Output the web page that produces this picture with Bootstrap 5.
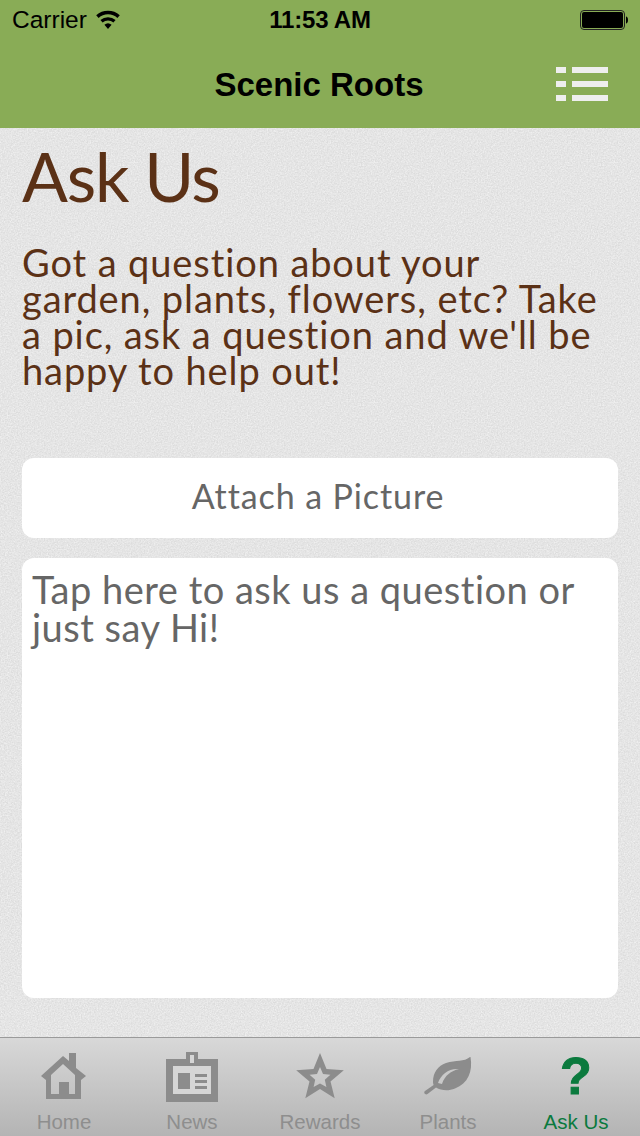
<!DOCTYPE html>
<html lang="en">
<head>
    <meta charset="UTF-8">
    <title>Scenic Roots - Ask Us</title>
    <link href="https://cdn.jsdelivr.net/npm/bootstrap@5.3.0/dist/css/bootstrap.min.css" rel="stylesheet">
    <style>
        html, body { height: 100%; }
        body { width: 640px; height: 1136px; overflow: hidden; font-family: "Liberation Sans", Arial, sans-serif; }
        .app-head { background-color: #89ac56; height: 128px; color: #000; }
        .status-row { height: 40px; padding: 0 12px; font-size: 24.5px; display: grid; grid-template-columns: 1fr auto 1fr; align-items: center; }
        .status-row .clock { font-size: 24px; font-weight: 700; letter-spacing: -.2px; }
        .title-row { height: 88px; display: grid; grid-template-columns: 1fr auto 1fr; align-items: center; padding: 0 32px; }
        .title-row .app-name { font-size: 33px; font-weight: 700; margin: 0 2px 0 0; line-height: 1; }
        .ask-body { height: 909px; padding: 0 22px; color: #5b3116; font-family: Lato, "Open Sans", sans-serif; background-color: #dcdcdc;
            background-image: url("data:image/svg+xml;utf8,<svg xmlns='http://www.w3.org/2000/svg' width='240' height='240'><filter id='n'><feTurbulence type='fractalNoise' baseFrequency='.7' numOctaves='2'/><feColorMatrix values='0 0 0 0 1 0 0 0 0 1 0 0 0 0 1 .7 .7 0 0 -.45'/></filter><rect width='240' height='240' filter='url(%23n)'/></svg>"); }
        .ask-title { font-size: 68px; line-height: 1; font-weight: 400; letter-spacing: -1.3px; margin: 0; padding-top: 14px; height: 116px; }
        .ask-intro { font-size: 38px; line-height: 36px; letter-spacing: .9px; margin: 0; height: 214px; white-space: nowrap; }
        .attach-btn { height: 80px; width: 100%; border-radius: 12px; background: #fff; border: 0; color: #666; font-size: 34px; letter-spacing: .9px; font-family: inherit; padding: 0 4px 6px 0; }
        .attach-btn:hover { background: #fff; color: #666; }
        .ask-box { height: 440px; margin-top: 20px; border-radius: 12px; border: 0; background: #fff; color: #666; font-size: 38px; line-height: 38px; letter-spacing: .5px; padding: 12px 10px; }
        .tabs { height: 99px; border-top: 1px solid #9a9a9a; background: linear-gradient(#d8d8d8, #b4b4b4); }
        .tab-item { width: 128px; color: #8e8e8e; font-size: 20.5px; line-height: 1; }
        .tab-item svg { display: block; margin-top: 14px; margin-bottom: 8px; fill: #8c8c8c; }
        .tab-item .q-mark { display: block; height: 74px; color: #0b7a3e; font-size: 52px; font-weight: 700; line-height: 76px; -webkit-text-stroke: 1px #0b7a3e; }
        .tab-item.on { color: #0b7a3e; }
    </style>
</head>
<body>

    <header class="app-head">
        <div class="status-row">
            <div class="d-flex align-items-center">
                <span>Carrier</span>
                <svg class="ms-2" width="26" height="20" viewBox="0 0 26 20"><path d="M13 19l-3.600-4.200a5.400 5.400 0 0 1 7.200 0zM7.600 12.600L5.400 10a11.600 11.600 0 0 1 15.200 0l-2.200 2.600a8.200 8.200 0 0 0-10.800 0zM3.600 7.900L1.200 5.200a17.800 17.800 0 0 1 23.600 0l-2.400 2.700a14.200 14.200 0 0 0-18.800 0z"/></svg>
            </div>
            <div class="clock">11:53 AM</div>
            <div class="d-flex justify-content-end">
                <svg width="48" height="20" viewBox="0 0 48 20"><rect x=".5" y=".5" width="44" height="19" rx="3.500" fill="none" stroke="#222"/><rect x="2" y="2" width="41" height="16" rx="2"/><path d="M46 6.500c1.200 0 2 1.200 2 3.500s-.8 3.500-2 3.500z"/></svg>
            </div>
        </div>
        <div class="title-row">
            <div></div>
            <h1 class="app-name">Scenic Roots</h1>
            <div class="d-flex justify-content-end">
                <svg width="52" height="35" viewBox="0 0 52 35" fill="#eeeeee"><path d="M0 0h10v6H0zM16 0h36v6H16zM0 14h10v6H0zM16 14h36v6H16zM0 28h10v6H0zM16 28h36v6H16z"/></svg>
            </div>
        </div>
    </header>

    <main class="ask-body">
        <h2 class="ask-title">Ask Us</h2>
        <p class="ask-intro">Got a question about your<br>garden, plants, flowers, etc? Take<br>a pic, ask a question and we'll be<br>happy to help out!</p>
        <button type="button" class="btn attach-btn">Attach a Picture</button>
        <div class="ask-box">Tap here to ask us a question or<br>just say Hi!</div>
    </main>

    <nav class="tabs d-flex">
        <div class="tab-item d-flex flex-column align-items-center">
            <svg width="56" height="52" viewBox="0 0 56 52"><path fill-rule="evenodd" d="M5 24L27 4l6 5V1h7v15l10 8-5 4v19H10V28zM27 12L15 23v19h8V30h10v12h6V23z"/></svg>
            <span>Home</span>
        </div>
        <div class="tab-item d-flex flex-column align-items-center">
            <svg width="56" height="52" viewBox="0 0 56 52"><path d="M26 3h4v8h-4zM9 14h38v28H9z" fill="#d6d6d6"/><path fill-rule="evenodd" d="M2 7h20V0h12v7h20v43H2zM26 3v8h4V3zM9 14v28h38V14z"/><path d="M14 21h12v16H14zM31 22h12v3H31zM31 28h12v3H31zM31 34h12v3H31z"/></svg>
            <span>News</span>
        </div>
        <div class="tab-item d-flex flex-column align-items-center">
            <svg width="56" height="52" viewBox="0 0 56 52"><path fill-rule="evenodd" d="M28 1l6.500 16.100 17.300 1.200-13.300 11.100 4.200 16.800L28 37l-14.700 9.200 4.200-16.800L4.200 18.300l17.300-1.200zM28 15l-3 7-7.400.7 5.600 5-1.600 7.300L28 31.500l6.400 3.500-1.600-7.300 5.600-5-7.400-.7z"/></svg>
            <span>Rewards</span>
        </div>
        <div class="tab-item d-flex flex-column align-items-center">
            <svg width="56" height="52" viewBox="0 0 56 52"><path d="M50 5c-6 5-14 3-24 6-8 3-13 9-13 19 0 1 .2 2 .6 3l-8.600 6c-2 1.500 .5 4.500 2.500 3l8.500-6.500c5 3 12 4 19 1 13-5 18-17 15.500-31.500z"/><path d="M18 31c3-9 11-15 21-14-8 2-14 6-17 15z" fill="#c9c9c9"/></svg>
            <span>Plants</span>
        </div>
        <div class="tab-item on d-flex flex-column align-items-center">
            <span class="q-mark">?</span>
            <span>Ask Us</span>
        </div>
    </nav>

    <script src="https://cdn.jsdelivr.net/npm/bootstrap@5.3.0/dist/js/bootstrap.bundle.min.js"></script>
</body>
</html>
